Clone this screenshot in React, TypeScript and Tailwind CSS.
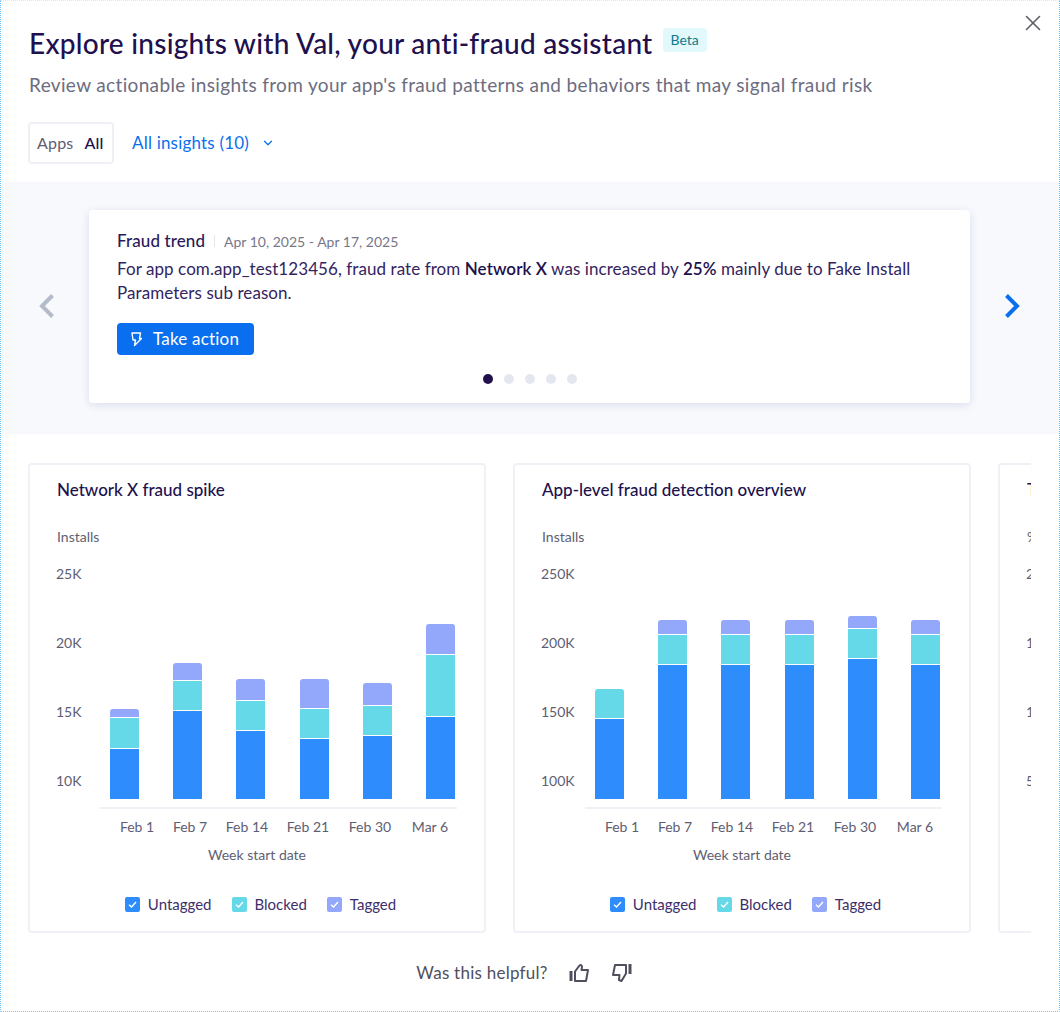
import { ChevronDown, X } from "lucide-react";

const FONT = "font-['Lato','Noto_Sans',sans-serif]";

interface Bar {
  top: number;
  cyan: number;
  blue: number;
}

const BLUE = "#2e8cfc";
const CYAN = "#66d9e8";
const PURPLE = "#93a8fb";
const BASE = 799;
const BAR_X = [110, 173, 236, 300, 363, 426];
const X_LABELS = ["Feb 1", "Feb 7", "Feb 14", "Feb 21", "Feb 30", "Mar 6"];
const X_CENTERS = [137, 190, 247, 308, 370, 430];

const SPIKE: Bar[] = [
  { top: 709, cyan: 718, blue: 749 },
  { top: 663, cyan: 681, blue: 711 },
  { top: 679, cyan: 701, blue: 731 },
  { top: 679, cyan: 709, blue: 739 },
  { top: 683, cyan: 706, blue: 736 },
  { top: 624, cyan: 655, blue: 717 },
];

const OVERVIEW: Bar[] = [
  { top: 689, cyan: 689, blue: 719 },
  { top: 620, cyan: 635, blue: 665 },
  { top: 620, cyan: 635, blue: 665 },
  { top: 620, cyan: 635, blue: 665 },
  { top: 616, cyan: 629, blue: 659 },
  { top: 620, cyan: 635, blue: 665 },
];

// round only the upper corners of a bar segment
function topRounded(x: number, y: number, w: number, h: number) {
  const r = Math.min(3, h);
  return `M${x} ${y + h}V${y + r}Q${x} ${y} ${x + r} ${y}H${x + w - r}Q${x + w} ${y} ${x + w} ${y + r}V${y + h}Z`;
}

function Chart({ yTitle, yLabels, bars }: { yTitle: string; yLabels: string[]; bars: Bar[] }) {
  // coordinates below are page coords of the first card, shifted by the viewBox
  return (
    <svg width="454" height="352" viewBox="30 520 454 352" className="block">
      <g fontSize="14" fill="#5e5e72">
        <text x="57" y="542">{yTitle}</text>
        {yLabels.map((l, i) => (
          <text key={l} x="56" y={579 + i * 69}>{l}</text>
        ))}
        {X_LABELS.map((l, i) => (
          <text key={l} x={X_CENTERS[i]} y="832" textAnchor="middle">{l}</text>
        ))}
        <text x="257" y="860" textAnchor="middle">Week start date</text>
      </g>
      <rect x="100" y="807" width="357" height="2" fill="#f0f1f6" />
      {bars.map((b, i) => {
        const x = BAR_X[i];
        return (
          <g key={x}>
            {b.top < b.cyan && <path d={topRounded(x, b.top, 29, b.cyan - b.top - 1)} fill={PURPLE} />}
            {b.top < b.cyan ? (
              <rect x={x} y={b.cyan} width="29" height={b.blue - b.cyan - 1} fill={CYAN} />
            ) : (
              <path d={topRounded(x, b.cyan, 29, b.blue - b.cyan - 1)} fill={CYAN} />
            )}
            <rect x={x} y={b.blue} width="29" height={BASE - b.blue} fill={BLUE} />
          </g>
        );
      })}
    </svg>
  );
}

function LegendItem({ label, color }: { label: string; color: string }) {
  return (
    <div className="flex items-center gap-2">
      <span className="flex h-[15px] w-[15px] items-center justify-center rounded-[2px]" style={{ backgroundColor: color }}>
        <svg width="11" height="11" viewBox="0 0 11 11" fill="none" stroke="#fff" strokeWidth="1.4">
          <path d="M2 5.8 4.5 8 9 3" />
        </svg>
      </span>
      <span className="text-[15px] text-[#3d2f6b]">{label}</span>
    </div>
  );
}

function ChartCard({ title, yTitle, yLabels, bars }: { title: string; yTitle: string; yLabels: string[]; bars: Bar[] }) {
  return (
    <div className="h-[470px] w-[458px] shrink-0 rounded-[4px] border-2 border-[#f0f1f7]">
      <h3 className="h-[55px] pl-[27px] pt-[12px] text-[17px] font-medium leading-[26px] text-[#21104e]">{title}</h3>
      <Chart yTitle={yTitle} yLabels={yLabels} bars={bars} />
      <div className="mt-[21px] flex items-center justify-center gap-[20px] pl-[7px]">
        <LegendItem label="Untagged" color={BLUE} />
        <LegendItem label="Blocked" color={CYAN} />
        <LegendItem label="Tagged" color={PURPLE} />
      </div>
    </div>
  );
}

export default function App() {
  return (
    <div className={`${FONT} relative h-[1012px] w-[1060px] overflow-hidden border border-dotted border-x-[#6cbcf6] border-b-[#7cc4f5] border-t-[#cfeafb] bg-white`}>
      <button className="absolute right-[13px] top-[9px] text-[#5f5f66]">
        <X size={26} strokeWidth={1.5} />
      </button>

      {/* Header */}
      <div className="h-[181px] pl-[28px] pt-[23px]">
        <div className="flex items-start">
          <h1 className="text-[28px] font-medium leading-[38px] tracking-[0.25px] text-[#21104e]">
            Explore insights with Val, your anti-fraud assistant
          </h1>
          <span className="ml-[10px] mt-[4px] rounded-[4px] bg-[#e3f8fb] px-2 py-0.5 text-[14px] leading-[20px] text-[#0f7a8c]">Beta</span>
        </div>
        <p className="mt-[9px] text-[19px] leading-[28px] tracking-[0.35px] text-[#6d6d80]">
          Review actionable insights from your app's fraud patterns and behaviors that may signal fraud risk
        </p>
        <div className="-ml-[1px] mt-[23px] flex items-center">
          <div className="flex h-[42px] w-[86px] items-center gap-[11px] rounded-[4px] border-2 border-[#eff0f6] pl-[7px] text-[16px] tracking-[0.2px]">
            <span className="text-[#5e5e72]">Apps</span>
            <span className="font-medium text-[#21104e]">All</span>
          </div>
          <button className="ml-[18px] flex items-center gap-[12px] text-[17px] tracking-[0.2px] text-[#0a6fee]">
            All insights (10)
            <ChevronDown size={14} strokeWidth={2.2} />
          </button>
        </div>
      </div>

      {/* Carousel */}
      <div className="flex h-[252px] items-start bg-[#f8f9fc]">
        <div className="flex w-[88px] justify-center pl-[3px] pt-[111px]">
          <svg width="18" height="26" viewBox="0 0 18 26" fill="none" stroke="#b4bccb" strokeWidth="4">
            <path d="M14.5 2.5 4 13l10.5 10.5" />
          </svg>
        </div>
        <div className="mt-[28px] h-[193px] w-[881px] rounded-[4px] bg-white pl-[28px] pt-[19px] shadow-[0_2px_8px_rgba(60,90,170,0.16)]">
          <div className="flex items-center">
            <span className="text-[17px] font-medium leading-[24px] tracking-[0.1px] text-[#2a1a57]">Fraud trend</span>
            <span className="mx-[9px] h-[12px] w-[1px] bg-[#e6e7ee]" />
            <span className="text-[14px] text-[#77778a]">Apr 10, 2025 - Apr 17, 2025</span>
          </div>
          <p className="mt-[4px] w-[825px] text-[17px] leading-[24px] tracking-[0.07px] text-[#332460]">
            For app com.app_test123456, fraud rate from <b className="font-semibold text-[#21104e]">Network X</b> was increased by <b className="font-semibold text-[#21104e]">25%</b> mainly due to Fake Install Parameters sub reason.
          </p>
          <button className="mt-[18px] flex h-[32px] w-[137px] items-center rounded-[4px] bg-[#0a6fee] pl-[14px] text-[17px] leading-[30px] tracking-[0.2px] text-white">
            <svg width="11" height="15" viewBox="0 0 11 15" fill="none" stroke="#fff" strokeWidth="1.4" strokeLinejoin="round">
              <path d="M1 1H9.500L8.500 6.500H10.500L3.500 13.500L4.500 8H2Z" />
            </svg>
            <span className="ml-[11px]">Take action</span>
          </button>
          <div className="-ml-[28px] mt-[19px] flex justify-center gap-[11px]">
            <span className="h-[10px] w-[10px] rounded-full bg-[#21104e]" />
            <span className="h-[10px] w-[10px] rounded-full bg-[#e5e7f0]" />
            <span className="h-[10px] w-[10px] rounded-full bg-[#e5e7f0]" />
            <span className="h-[10px] w-[10px] rounded-full bg-[#e5e7f0]" />
            <span className="h-[10px] w-[10px] rounded-full bg-[#e5e7f0]" />
          </div>
        </div>
        <div className="flex flex-1 justify-center pr-[6px] pt-[111px]">
          <svg width="18" height="26" viewBox="0 0 18 26" fill="none" stroke="#0a6fee" strokeWidth="4">
            <path d="M3.500 2.500 14 13 3.500 23.500" />
          </svg>
        </div>
      </div>

      {/* Charts */}
      <div className="ml-[27px] mt-[29px] flex w-[1003px] gap-[27px] overflow-hidden">
        <ChartCard title="Network X fraud spike" yTitle="Installs" yLabels={["25K", "20K", "15K", "10K"]} bars={SPIKE} />
        <ChartCard title="App-level fraud detection overview" yTitle="Installs" yLabels={["250K", "200K", "150K", "100K"]} bars={OVERVIEW} />
        <ChartCard title="Top fraud reasons" yTitle="% of installs" yLabels={["20%", "15%", "10%", "5%"]} bars={[]} />
      </div>

      {/* Feedback */}
      <div className="mt-[27px] flex items-center justify-center gap-[21px] pr-[12px]">
        <span className="text-[17px] tracking-[0.25px] text-[#4f4f5e]">Was this helpful?</span>
        <svg width="21" height="20" viewBox="0 0 21 20" fill="none" stroke="#4f4f5e" strokeWidth="2" strokeLinejoin="round">
          <rect x="0.500" y="8" width="3" height="10" fill="#4f4f5e" stroke="none" />
          <path d="M6 8.500 10.500 2.500c1.500-1 2.500 0 2.500 1.500L12.500 7H19l-2 11H6Z" />
        </svg>
        <svg width="21" height="20" viewBox="0 0 21 20" fill="none" stroke="#4f4f5e" strokeWidth="2" strokeLinejoin="round">
          <rect x="17.500" y="1" width="3" height="10" fill="#4f4f5e" stroke="none" />
          <path d="M15 10.500 10.500 18 8 17l.5-5H2L4 2h11Z" />
        </svg>
      </div>
    </div>
  );
}
